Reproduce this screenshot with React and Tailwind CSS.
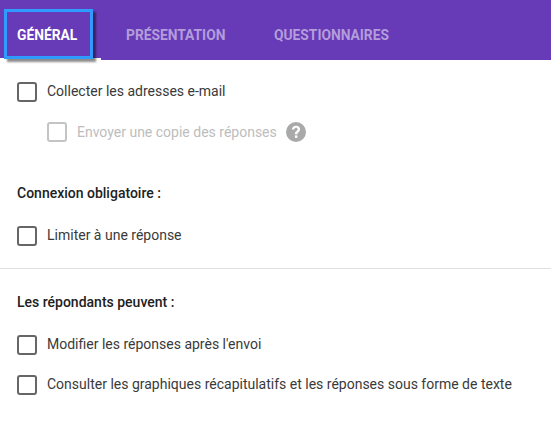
const Checkbox = ({ disabled }) => (
  <span
    className={
      disabled
        ? "w-5 h-5 rounded-[3px] border-2 border-[#c4c4c4] shrink-0"
        : "w-5 h-5 mt-[2px] rounded-[3px] border-2 border-[#666666] shrink-0"
    }
  />
);

const Row = ({ label, className }) => (
  <div className={"flex items-center gap-[10px] h-5 pl-[17px] text-[14px] text-[#3a3a3a] " + className}>
    <Checkbox />
    <span>{label}</span>
  </div>
);

const App = () => {
  return (
    <div className="relative w-[551px] h-[422px] bg-white overflow-hidden font-['Roboto',sans-serif]">
      <div className="flex h-[60px] bg-[#673ab7] text-[13.8px] font-bold uppercase text-[#b39ddb]">
        <div className="w-[101px] pl-[17px] pt-[25px] text-white border-b-2 border-white">Général</div>
        <div className="w-[148px] pl-[25px] pt-[25px]">Présentation</div>
        <div className="pl-[25px] pt-[25px]">Questionnaires</div>
      </div>

      <div className="absolute left-[4px] top-[9px] w-[89px] h-[50px] border-[3px] border-[#2f9bff] shadow-[3px_3px_2px_rgba(0,0,0,0.45)]" />

      <Row label="Collecter les adresses e-mail" className="mt-[21px]" />

      <div className="flex items-center h-5 mt-[21px] pl-[47px] text-[14px] text-[#bdbdbd]">
        <Checkbox disabled />
        <span className="ml-[10px]">Envoyer une copie des réponses</span>
        <svg className="ml-[9px] w-5 h-5" viewBox="0 0 20 20">
          <circle cx="10" cy="10" r="10" fill="#a9a9a9" />
          <path
            d="M5.9 7.6c0-2.4 1.8-3.9 4.2-3.9s4 1.4 4 3.5c0 2.6-2.7 2.9-2.7 5H8.9c0-3.1 2.7-3.3 2.7-4.9 0-.9-.6-1.5-1.6-1.5-1 0-1.6.7-1.7 1.8z"
            fill="#fff"
          />
          <rect x="8.9" y="13.4" width="2.5" height="2.4" fill="#fff" />
        </svg>
      </div>

      <h2 className="mt-[41px] pl-[17px] h-5 leading-5 text-[14px] font-medium text-[#212121]">Connexion obligatoire :</h2>

      <Row label="Limiter à une réponse" className="mt-[22px]" />

      <hr className="mt-[23px] border-[#e0e0e0]" />

      <h2 className="mt-[23px] pl-[17px] h-5 leading-5 text-[14px] font-medium text-[#212121]">Les répondants peuvent :</h2>

      <Row label="Modifier les réponses après l'envoi" className="mt-[22px]" />
      <Row label="Consulter les graphiques récapitulatifs et les réponses sous forme de texte" className="mt-[20px]" />
    </div>
  );
};

export default App;
